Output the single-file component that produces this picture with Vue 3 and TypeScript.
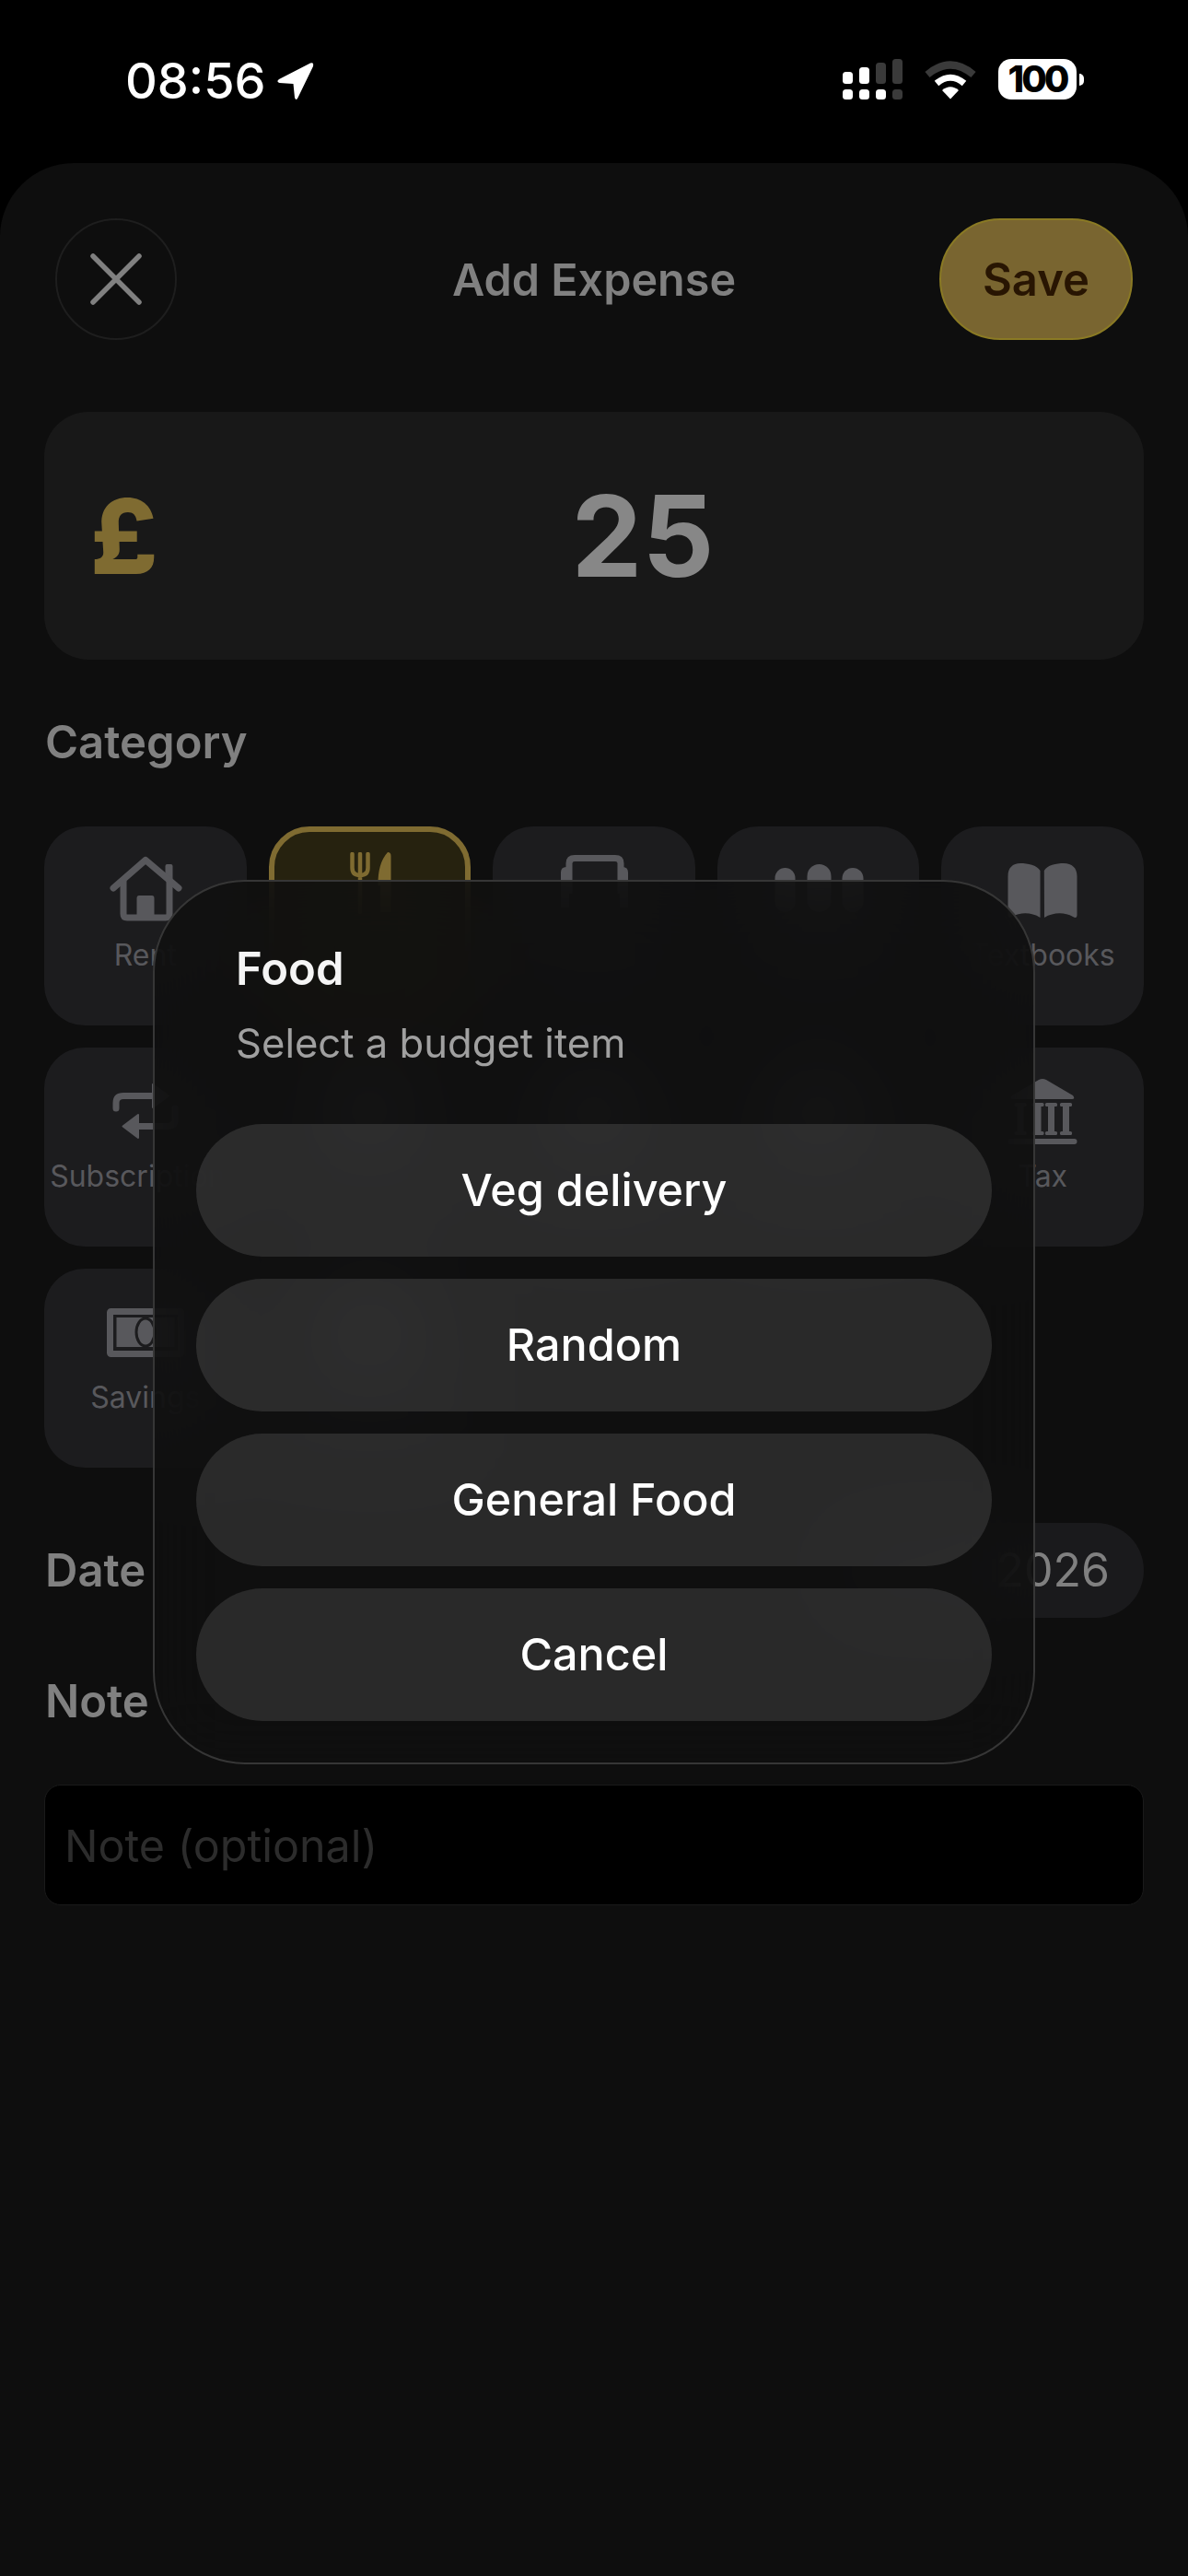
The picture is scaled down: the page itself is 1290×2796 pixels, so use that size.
<script setup lang="ts">
type Tile = {
    label: string,
    icon: string,
    active?: boolean
}

// Labels behind the dialog are not visible, so those tiles only carry their icon
const tiles: Tile[] = [
    { label: 'Rent', icon: 'house' },
    { label: '', icon: 'food', active: true },
    { label: '', icon: 'bag' },
    { label: '', icon: 'people' },
    { label: 'Textbooks', icon: 'book' },
    { label: 'Subscriptions', icon: 'repeat' },
    { label: '', icon: 'blob' },
    { label: '', icon: 'blob' },
    { label: '', icon: 'blob' },
    { label: 'Tax', icon: 'bank' },
    { label: 'Savings', icon: 'cash' },
    { label: '', icon: 'blob' }
]

const budgetItems = ['Veg delivery', 'Random', 'General Food', 'Cancel']
const columns = [36, 55, 69.5, 85.5]
</script>

<template>
    <div class="screen">
        <div class="status">
            <div class="status-left">
                <span class="time">08:56</span>
                <svg class="arrow" width="42" height="44" viewBox="0 0 42 44">
                    <path d="M38 2.5 L4 20 Q0.5 22.5 4.5 24 L19.5 25 L21 40 Q22.5 44 24.5 40 L41 6 Q42 1 38 2.5 Z" fill="#fff" />
                </svg>
            </div>
            <div class="status-right">
                <svg width="66" height="46" viewBox="0 0 66 46">
                    <rect x="0" y="14" width="11" height="13" rx="3.5" fill="#fff" />
                    <rect x="18" y="9" width="11" height="18" rx="3.5" fill="#fff" />
                    <rect x="36" y="4" width="11" height="23" rx="3.5" fill="#3a3a3a" />
                    <rect x="54" y="0" width="11" height="27" rx="3.5" fill="#3a3a3a" />
                    <rect x="0" y="33" width="11" height="11" rx="3.5" fill="#fff" />
                    <rect x="18" y="33" width="11" height="11" rx="3.5" fill="#fff" />
                    <rect x="36" y="33" width="11" height="11" rx="3.5" fill="#fff" />
                    <rect x="54" y="33" width="11" height="11" rx="3.5" fill="#3a3a3a" />
                </svg>
                <svg class="wifi" width="58" height="42" viewBox="0 0 58 42">
                    <path d="M4 15 Q29 -6 54 15" fill="none" stroke="#3a3a3a" stroke-width="8" />
                    <path d="M14 24.5 Q29 12 44 24.5" fill="none" stroke="#fff" stroke-width="7" />
                    <path d="M20 32 Q29 24.5 38 32 L29 41.5 Z" fill="#fff" />
                </svg>
                <div class="battery">
                    <span class="battery-body">100</span>
                    <span class="battery-tip"></span>
                </div>
            </div>
        </div>

        <div class="sheet">
            <div class="top-row">
                <div class="close">
                    <svg width="56" height="56" viewBox="0 0 56 56">
                        <path d="M3 3 L53 53 M53 3 L3 53" stroke="#808080" stroke-width="5.5" stroke-linecap="round" />
                    </svg>
                </div>
                <div class="title">Add Expense</div>
                <div class="save">Save</div>
            </div>

            <div class="amount">
                <span class="currency">£</span>
                <span class="value">25</span>
            </div>

            <div class="label category-label">Category</div>

            <div class="tiles">
                <div v-for="(tile, i) in tiles" :key="i" class="tile" :class="{ active: tile.active }">
                    <svg class="tile-icon" width="120" height="90" viewBox="0 0 120 90" fill="none">
                        <g v-if="tile.icon === 'house'">
                            <path d="M81.5 15 Q81.5 13 83.5 13 L87.5 13 Q89.5 13 89.5 15 L89.5 30 L81.5 26 Z" fill="#58585c" />
                            <path d="M25 39 L60 8.5 L96 39" stroke="#58585c" stroke-width="7" stroke-linecap="round" stroke-linejoin="round" />
                            <path d="M36 31 V67 Q36 71 40 71 H82 Q86 71 86 67 V31" stroke="#58585c" stroke-width="7" />
                            <path d="M50.5 50 Q50.5 47 53 47 H67 Q69.5 47 69.5 50 V71 H50.5 Z" fill="#58585c" />
                        </g>
                        <g v-else-if="tile.icon === 'food'">
                            <path d="M41.5 2 V17 Q41.5 25 50 25 Q58.5 25 58.5 17 V2 M50 2 V65" stroke="#7f6b31" stroke-width="4.5" stroke-linecap="round" />
                            <path d="M80 0 Q83.5 0 83.5 4 V65 H72 V36 H69.5 Q69 12 80 0 Z" fill="#7f6b31" />
                        </g>
                        <g v-else-if="tile.icon === 'bag'">
                            <path d="M33 45 V12 Q33 6.5 39 6.5 H83 Q89 6.5 89 12 V45" stroke="#58585c" stroke-width="7" />
                            <path d="M24 60 V22 Q24 16 30 16 H33 V60 Z M97 60 V22 Q97 16 91 16 H88 V60 Z" fill="#58585c" />
                        </g>
                        <g v-else-if="tile.icon === 'people'" fill="#58585c">
                            <rect x="12.5" y="17" width="22" height="48" rx="11" />
                            <rect x="47.5" y="13" width="26" height="52" rx="13" />
                            <rect x="85.5" y="17" width="23" height="48" rx="11.5" />
                        </g>
                        <g v-else-if="tile.icon === 'book'" fill="#58585c">
                            <path d="M61.8 20 C65 14 75 12 83 12 C92 12 97.5 17 97.5 26 V68 Q97.5 72.5 93 70 C84 65 72 65 62 71 Z" />
                            <path d="M57.5 20 C54 14 44 12 36 12 C27.5 12 22.5 17 22.5 26 V68 Q22.5 72.5 27 70 C36 65 48 65 57.5 71 Z" />
                        </g>
                        <g v-else-if="tile.icon === 'repeat'">
                            <path d="M28 38 V32 Q28 24.5 36 24.5 H70 M92 38 V50 Q92 57.5 84 57.5 H48" stroke="#58585c" stroke-width="7" stroke-linecap="round" />
                            <path d="M68 12 L85 24.5 L68 37 Z M52 45 L35.5 57.5 L52 70 Z" fill="#58585c" stroke="#58585c" stroke-width="2" stroke-linejoin="round" />
                        </g>
                        <g v-else-if="tile.icon === 'bank'">
                            <path d="M56 7 Q60 5 64 7 L93 24 Q96 28 92 28 H28 Q24 28 27 24 Z" fill="#58585c" />
                            <g v-for="x in columns" :key="x" fill="#58585c">
                                <rect :x="x - 6.5" y="32" width="13" height="4" rx="1.5" />
                                <rect :x="x - 3.5" y="34" width="7" height="32" />
                                <rect :x="x - 6.5" y="63" width="13" height="4" rx="1.5" />
                            </g>
                            <rect x="22.5" y="71" width="75" height="6" rx="3" fill="#58585c" />
                        </g>
                        <g v-else-if="tile.icon === 'cash'">
                            <rect x="21.5" y="18.5" width="77" height="46" rx="1" stroke="#58585c" stroke-width="7" />
                            <rect x="28.5" y="25" width="63" height="32" fill="#58585c" />
                            <ellipse cx="60" cy="41" rx="10" ry="15" fill="#58585c" stroke="#1c1c1e" stroke-width="3" />
                        </g>
                        <circle v-else cx="60" cy="40" r="30" fill="#58585c" />
                    </svg>
                    <div class="tile-label">{{ tile.label }}</div>
                </div>
            </div>

            <div class="date-row">
                <div class="label">Date</div>
                <div class="date-pill">2026</div>
            </div>

            <div class="label note-label">Note</div>
            <div class="note-input">Note (optional)</div>
        </div>

        <div class="dialog">
            <div class="dialog-title">Food</div>
            <div class="dialog-sub">Select a budget item</div>
            <div class="dialog-list">
                <div v-for="item in budgetItems" :key="item" class="dialog-btn">{{ item }}</div>
            </div>
        </div>
    </div>
</template>

<style>
html, body {
    background: #000;
}
</style>

<style scoped>
.screen {
    position: relative;
    width: 1290px;
    height: 2796px;
    overflow: hidden;
    background: #000;
    font-family: Inter, "Noto Sans", sans-serif;
}

.status {
    height: 177px;
    display: flex;
    justify-content: space-between;
    box-sizing: border-box;
    padding: 60px 113px 0 136px;
}

.status-left {
    display: flex;
    align-items: flex-start;
    gap: 10px;
    height: 56px;
}

.time {
    color: #fff;
    font-size: 54px;
    font-weight: 500;
    line-height: 56px;
}

.arrow {
    margin-top: 6px;
}

.status-right {
    display: flex;
    align-items: flex-start;
    padding-top: 4px;
    gap: 22px;
}

.wifi {
    margin-top: 2px;
}

.battery {
    display: flex;
    align-items: center;
    gap: 3px;
    margin-left: 1px;
}

.battery-body {
    width: 85px;
    height: 44px;
    border-radius: 14px;
    background: #fff;
    color: #000;
    font-size: 40px;
    font-weight: 800;
    letter-spacing: -3px;
    line-height: 44px;
    text-align: center;
}

.battery-tip {
    width: 5px;
    height: 13px;
    background: #fff;
    border-radius: 0 6px 6px 0;
}

.sheet {
    height: 2619px;
    box-sizing: border-box;
    padding: 60px 48px 0;
    background: #0e0e0e;
    border-radius: 80px 80px 0 0;
}

.top-row {
    display: grid;
    grid-template-columns: 1fr auto 1fr;
    align-items: center;
    height: 132px;
    padding: 0 12px;
}

.close {
    width: 132px;
    height: 132px;
    box-sizing: border-box;
    border: 2px solid #1e1e1e;
    border-radius: 50%;
    display: grid;
    place-items: center;
}

.title {
    color: #808080;
    font-size: 48.5px;
    font-weight: 600;
}

.save {
    justify-self: end;
    width: 210px;
    height: 132px;
    box-sizing: border-box;
    border: 2px solid #8a7a24;
    border-radius: 66px;
    background: #796530;
    color: #281502;
    font-size: 49px;
    font-weight: 600;
    display: grid;
    place-items: center;
}

.amount {
    margin-top: 78px;
    height: 269px;
    box-sizing: border-box;
    padding: 0 16px 0 50px;
    border-radius: 48px;
    background: #181818;
    display: flex;
    align-items: center;
}

.currency {
    width: 72px;
    color: #7f6b31;
    font-size: 113px;
    font-weight: 800;
}

.value {
    flex: 1;
    text-align: center;
    color: #878787;
    font-size: 122px;
    font-weight: 700;
}

.label {
    height: 60px;
    padding-left: 1px;
    color: #808080;
    font-size: 49px;
    font-weight: 600;
    line-height: 60px;
}

.category-label {
    margin-top: 60px;
}

.tiles {
    margin-top: 61px;
    display: grid;
    grid-template-columns: repeat(5, 1fr);
    gap: 24px;
}

.tile {
    height: 216px;
    box-sizing: border-box;
    padding-top: 28px;
    border-radius: 44px;
    background: #1c1c1e;
    text-align: center;
    overflow: hidden;
}

.tile.active {
    padding-top: 22px;
    border: 6px solid #7f6b31;
    background: #26220f;
}

.tile-icon {
    display: block;
    margin: 0 auto;
}

.tile-label {
    margin-top: 2px;
    height: 40px;
    color: #58585c;
    font-size: 32px;
    line-height: 40px;
    white-space: nowrap;
}

.date-row {
    margin-top: 60px;
    height: 103px;
    display: flex;
    align-items: center;
    justify-content: space-between;
}

.date-pill {
    width: 342px;
    height: 103px;
    box-sizing: border-box;
    padding: 0 37px;
    border-radius: 52px;
    background: #1a1a1c;
    color: #808080;
    font-size: 50px;
    line-height: 103px;
    text-align: right;
}

.note-label {
    margin-top: 61px;
}

.note-input {
    margin-top: 60px;
    height: 131px;
    box-sizing: border-box;
    padding: 0 21px;
    border: 1px solid #1a1a1a;
    border-radius: 18px;
    background: #000;
    color: #2c2c2c;
    font-size: 48.4px;
    line-height: 131px;
}

.dialog {
    position: absolute;
    left: 166px;
    top: 955px;
    width: 958px;
    height: 960px;
    box-sizing: border-box;
    padding: 65px 45px 0;
    border: 2px solid #363636;
    border-radius: 100px;
    background: rgba(15, 15, 15, 0.86);
    backdrop-filter: blur(40px);
}

.dialog-title {
    padding-left: 43px;
    color: #f5f5f5;
    font-size: 49px;
    font-weight: 600;
    line-height: 60px;
}

.dialog-sub {
    margin-top: 23px;
    padding-left: 43px;
    color: #a0a0a0;
    font-size: 43.6px;
    line-height: 56px;
}

.dialog-list {
    margin-top: 59px;
    display: flex;
    flex-direction: column;
    gap: 24px;
}

.dialog-btn {
    height: 144px;
    border-radius: 72px;
    background: rgba(255, 255, 255, 0.115);
    color: #fff;
    font-size: 48.5px;
    font-weight: 500;
    line-height: 144px;
    text-align: center;
}
</style>
